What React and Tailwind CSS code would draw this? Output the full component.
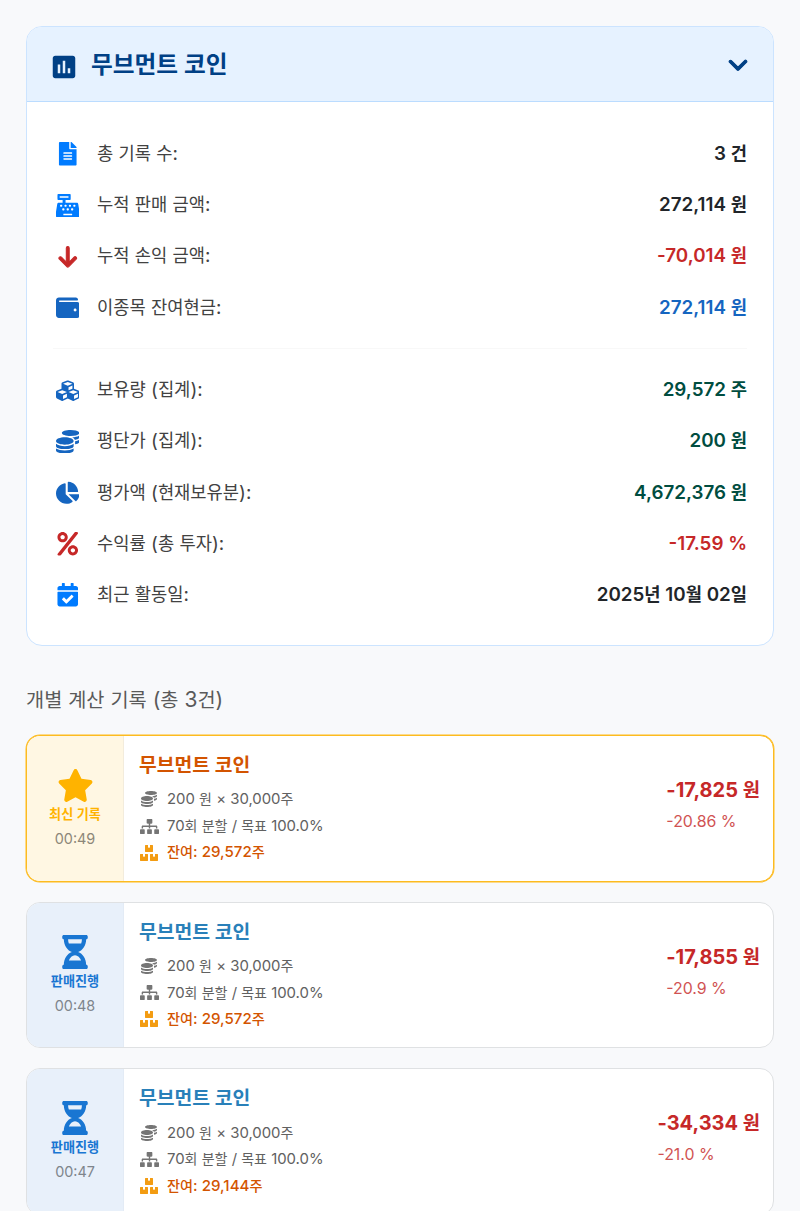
import { Fragment } from 'react';
import clsx from 'clsx';
import {
  FaBoxes, FaCalendarCheck, FaCashRegister, FaChartPie, FaCoins, FaCubes,
  FaFileAlt, FaHourglassHalf, FaPercent, FaSitemap, FaWallet,
} from 'react-icons/fa';
import { FaArrowDown, FaChevronDown, FaStar } from 'react-icons/fa6';
import { MdAssessment } from 'react-icons/md';

const SUMMARY = [
  { icon: FaFileAlt, tint: 'text-[#007bff]', label: '총 기록 수:', value: '3 건', tone: 'text-[#212529]' },
  { icon: FaCashRegister, tint: 'text-[#007bff]', label: '누적 판매 금액:', value: '272,114 원', tone: 'text-[#212529]' },
  { icon: FaArrowDown, tint: 'text-[#c62828]', stroke: 'stroke-[#c62828] [stroke-width:22px]', label: '누적 손익 금액:', value: '-70,014 원', tone: 'text-[#c62828]' },
  { icon: FaWallet, tint: 'text-[#1565c0]', label: '이종목 잔여현금:', value: '272,114 원', tone: 'text-[#1565c0]' },
];

const HOLDINGS = [
  { icon: FaCubes, tint: 'text-[#1565c0]', label: '보유량 (집계):', value: '29,572 주', tone: 'text-[#004d40]' },
  { icon: FaCoins, tint: 'text-[#1565c0]', label: '평단가 (집계):', value: '200 원', tone: 'text-[#004d40]' },
  { icon: FaChartPie, tint: 'text-[#1565c0]', label: '평가액 (현재보유분):', value: '4,672,376 원', tone: 'text-[#004d40]' },
  { icon: FaPercent, tint: 'text-[#c62828]', label: '수익률 (총 투자):', value: '-17.59 %', tone: 'text-[#c62828]' },
  { icon: FaCalendarCheck, tint: 'text-[#007bff]', label: '최근 활동일:', value: '2025년 10월 02일', tone: 'text-[#212529]' },
];

const RECORDS = [
  { latest: true, time: '00:49', left: '29,572', profit: '-17,825 원', rate: '-20.86 %' },
  { latest: false, time: '00:48', left: '29,572', profit: '-17,855 원', rate: '-20.9 %' },
  { latest: false, time: '00:47', left: '29,144', profit: '-34,334 원', rate: '-21.0 %' },
];

// Hangul is set slightly smaller than the Latin digits beside it so both share one optical size.
function Txt({ children }) {
  return children.split(/([가-힣]+)/).map((run, i) =>
    i % 2 ? (
      <span key={i} className="font-['Noto_Sans_CJK_KR',sans-serif] text-[0.94em]">{run}</span>
    ) : (
      <Fragment key={i}>{run}</Fragment>
    ),
  );
}

function StatRow({ icon: Icon, tint, stroke, label, value, tone }) {
  return (
    <div className="flex h-[51.2px] items-center">
      <span className={clsx('flex w-[29px] justify-center', tint)}>
        <Icon size={23.5} className={stroke} />
      </span>
      <span className="ml-[15px] text-[18.8px] text-[#424242]"><Txt>{label}</Txt></span>
      <span className={clsx('ml-auto text-[18.8px] font-semibold', tone)}><Txt>{value}</Txt></span>
    </div>
  );
}

function RecordCard({ latest, time, left, profit, rate }) {
  const Icon = latest ? FaStar : FaHourglassHalf;
  return (
    <article
      className={clsx(
        'mb-[20px] flex h-[146.7px] overflow-hidden rounded-[14px] border bg-white',
        latest ? 'border-[#fdbb1f] shadow-[0_0_0_0.5px_#fdbb1f]' : 'border-[#dfe1e3]',
      )}
    >
      <div
        className={clsx(
          'flex w-[97px] shrink-0 flex-col items-center border-r pt-[32px]',
          latest
            ? 'border-[#f3ecdc] bg-[#fff7e3] text-[#ffb300]'
            : 'border-[#e3ebf5] bg-[#e8f0fa] text-[#1976d2]',
        )}
      >
        <Icon size={latest ? 37 : 34} className={clsx(latest && '-my-[1.5px]')} />
        <span className="mt-[2px] text-[14px] leading-[20px] font-bold"><Txt>{latest ? '최신 기록' : '판매진행'}</Txt></span>
        <span className={clsx('mt-[5px] text-[14.4px] leading-[20px]', latest ? 'text-[#8d8779]' : 'text-[#7e858c]')}>{time}</span>
      </div>
      <div className="pt-[13px] pl-[15px] text-[14.9px] text-[#616161]">
        <h3 className={clsx('text-[20.5px] leading-[30px] font-bold', latest ? 'text-[#d35400]' : 'text-[#2980b9]')}>
          <Txt>무브먼트 코인</Txt>
        </h3>
        <p className="mt-[6px] flex h-[26.7px] items-center">
          <span className="mr-[8px] flex w-[20px] justify-center text-[#757575]"><FaCoins size={16} /></span>
          <span><Txt>200 원 × 30,000주</Txt></span>
        </p>
        <p className="flex h-[26.7px] items-center">
          <span className="mr-[8px] flex w-[20px] justify-center text-[#757575]"><FaSitemap size={19} /></span>
          <span><Txt>70회 분할 / 목표 100.0%</Txt></span>
        </p>
        <p className="flex h-[26.7px] items-center text-[15.1px] font-medium text-[#d35400]">
          <span className="mr-[8px] flex w-[20px] justify-center text-[#f39c12]"><FaBoxes size={18} /></span>
          <span><Txt>{`잔여: ${left}주`}</Txt></span>
        </p>
      </div>
      <div className="ml-auto pt-[38px] pr-[13px] text-[#c62828]">
        <p className="text-[20px] leading-[30px] font-bold"><Txt>{profit}</Txt></p>
        <p className="mt-[5px] text-[15.9px] leading-[24px] opacity-80">{rate}</p>
      </div>
    </article>
  );
}

export default function App() {
  return (
    <main className="h-[1211px] overflow-hidden bg-[#f8f9fb] px-[26px] pt-[26px] font-['Inter','Noto_Sans_CJK_KR',sans-serif]">
      <section className="h-[620px] overflow-hidden rounded-[16px] border border-[#cce4ff] bg-white">
        <header className="flex h-[75px] items-center border-b border-[#bbdcff] bg-[#e6f2ff] pt-[2px] pr-[25px] pl-[22px] text-[#004085]">
          <MdAssessment size={30} className="mt-[4px]" />
          <h1 className="ml-[12px] text-[25.2px] font-bold"><Txt>무브먼트 코인</Txt></h1>
          <FaChevronDown size={20} className="mt-[-3px] ml-auto stroke-[#004085] [stroke-width:30px]" />
        </header>
        <div className="px-[26px] pt-[26.6px]">
          {SUMMARY.map((row) => <StatRow key={row.label} {...row} />)}
          <hr className="mt-[14.5px] mb-[15.9px] border-[#f8f8f8]" />
          {HOLDINGS.map((row) => <StatRow key={row.label} {...row} />)}
        </div>
      </section>

      <h2 className="mt-[38px] mb-[20px] text-[21px] leading-[30px] text-[#5a5a5a]"><Txt>개별 계산 기록 (총 3건)</Txt></h2>

      {RECORDS.map((record) => <RecordCard key={record.time} {...record} />)}
    </main>
  );
}
